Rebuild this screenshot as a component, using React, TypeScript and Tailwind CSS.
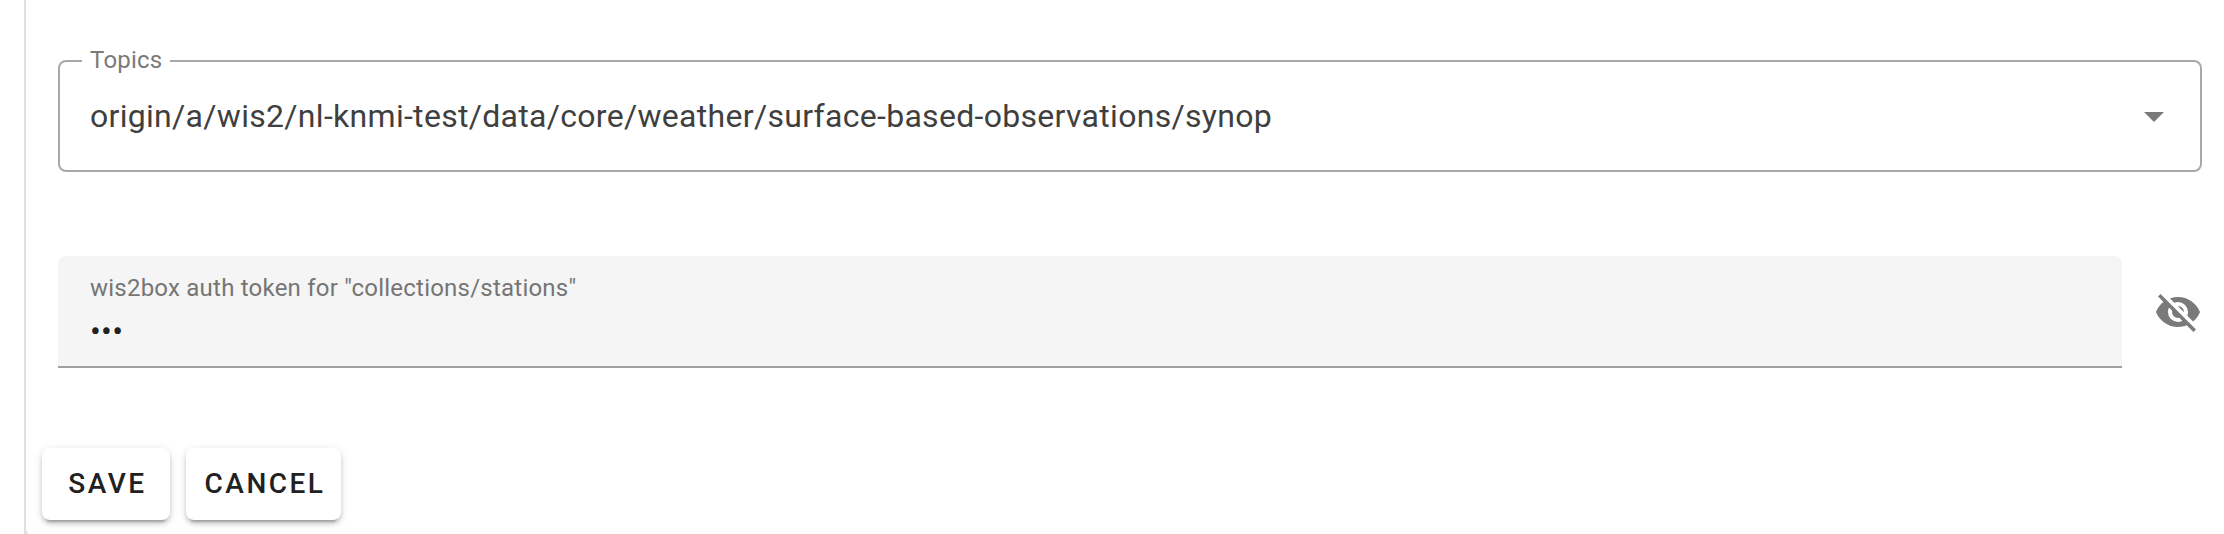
const EYE_OFF =
  'M11.83,9L15,12.16C15,12.11 15,12.05 15,12A3,3 0 0,0 12,9C11.94,9 11.89,9 11.83,9M7.53,9.8L9.08,11.35C9.03,11.56 9,11.77 9,12A3,3 0 0,0 12,15C12.22,15 12.44,14.97 12.65,14.92L14.2,16.47C13.53,16.8 12.79,17 12,17A5,5 0 0,1 7,12C7,11.21 7.2,10.47 7.53,9.8M2,4.27L4.28,6.55L4.73,7C3.08,8.3 1.78,10 1,12C2.73,16.39 7,19.5 12,19.5C13.55,19.5 15.03,19.2 16.38,18.66L16.81,19.08L19.73,22L21,20.73L3.27,3M12,7A5,5 0 0,1 17,12C17,12.64 16.87,13.26 16.64,13.82L19.57,16.75C21.07,15.5 22.27,13.86 23,12C21.27,7.61 17,4.5 12,4.5C10.6,4.5 9.26,4.75 8,5.2L10.17,7.35C10.74,7.13 11.35,7 12,7Z';
const MENU_DOWN = 'M7,10L12,15L17,10H7Z';

function Icon({ d }: { d: string }) {
  return (
    <svg viewBox="0 0 24 24" className="size-12 shrink-0 fill-[#7a7a7a]">
      <path d={d} />
    </svg>
  );
}

function Button({ label, width }: { label: string; width: string }) {
  return (
    <button
      className={`${width} flex h-[72px] items-center justify-center rounded-lg bg-white pl-[3px] text-[28px] leading-none font-medium tracking-[2.5px] text-[#212121] shadow-[0_6px_2px_-4px_rgba(0,0,0,0.2),0_4px_4px_0_rgba(0,0,0,0.14),0_2px_10px_0_rgba(0,0,0,0.12)]`}
    >
      {label}
    </button>
  );
}

function TopicsSelect() {
  return (
    <div className="relative flex h-28 w-[2144px] items-center justify-between rounded-lg border-2 border-[#a9a9a9] pr-[22px] pl-[30px]">
      <span className="absolute -top-4 left-[22px] bg-white pr-2 pl-2 text-[24px] leading-7 tracking-[0.225px] text-[#7a7a7a]">
        Topics
      </span>
      <span className="text-[32px] leading-[48px] tracking-[0.3px] text-[#3f3f3f]">
        origin/a/wis2/nl-knmi-test/data/core/weather/surface-based-observations/synop
      </span>
      <Icon d={MENU_DOWN} />
    </div>
  );
}

function TokenField() {
  return (
    <div className="mt-[84px] flex items-center gap-8">
      <div className="flex h-28 w-[2064px] flex-col rounded-t-lg bg-[#f5f5f5]">
        <div className="flex h-[110px] flex-col px-8 pt-[18px]">
          <span className="text-[24px] leading-7 tracking-[0.225px] text-[#757575]">
            wis2box auth token for "collections/stations"
          </span>
          <span className="mt-[5px] text-[32px] leading-[48px] tracking-[0.3px] text-[#212121]">•••</span>
        </div>
        <div className="h-0.5 bg-[#a0a0a0]" />
      </div>
      <Icon d={EYE_OFF} />
    </div>
  );
}

export default function App() {
  return (
    <div className="h-[534px] w-[2224px] overflow-hidden bg-white pl-6 font-[Roboto,sans-serif]">
      <div className="h-[536px] bg-[#e0e0e0] pl-0.5">
        <div className="h-[536px] rounded-bl-lg bg-white pt-[60px]">
          <div className="pl-8">
            <TopicsSelect />
            <TokenField />
          </div>
          <div className="mt-20 flex gap-4 pl-4">
            <Button label="SAVE" width="w-[128px]" />
            <Button label="CANCEL" width="w-[155px]" />
          </div>
        </div>
      </div>
    </div>
  );
}
